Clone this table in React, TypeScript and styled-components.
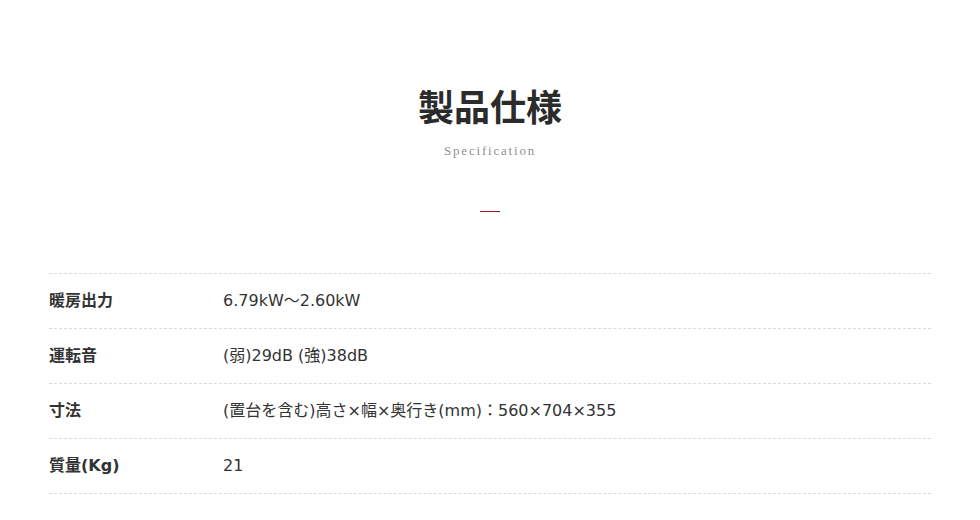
import React from 'react'
import styled, { createGlobalStyle } from 'styled-components'

const GlobalStyle = createGlobalStyle`
  html, body {
    margin: 0;
    padding: 0;
    background: #fff;
  }
  body {
    font-family: "DejaVu Sans", "Noto Sans CJK JP", sans-serif;
    color: #333;
  }
`

const Section = styled.section`
  padding: 84px 49px 0;
`

const Header = styled.header`
  display: flex;
  flex-direction: column;
  align-items: center;
`

const Title = styled.h2`
  margin: 0;
  font-family: "Noto Sans CJK JP", sans-serif;
  font-size: 36px;
  line-height: 43px;
  font-weight: 700;
  color: #2b2b2b;
`

const SubTitle = styled.p`
  margin: 14px 0 0;
  font-family: "Liberation Serif", "DejaVu Serif", serif;
  font-size: 13px;
  line-height: 20px;
  letter-spacing: 1.8px;
  color: #949090;
`

const Accent = styled.span`
  display: block;
  width: 20px;
  height: 1px;
  margin-top: 50px;
  background: #a3141e;
`

const SpecTable = styled.dl`
  margin: 61px 0 0;
  border-top: 1px dashed #dadada;
`

const Row = styled.div`
  display: grid;
  grid-template-columns: 174px 1fr;
  align-items: center;
  height: 54px;
  border-bottom: 1px dashed #dadada;
`

const Label = styled.dt`
  margin: 0;
  font-size: 16px;
  line-height: 22px;
  font-weight: 700;
  color: #333;
`

const Value = styled.dd`
  margin: 0;
  font-size: 16px;
  line-height: 22px;
  color: #333;
`

const specs = [
  { label: '暖房出力', value: '6.79kW～2.60kW' },
  { label: '運転音', value: '(弱)29dB (強)38dB' },
  { label: '寸法', value: '(置台を含む)高さ×幅×奥行き(mm)：560×704×355' },
  { label: '質量(Kg)', value: '21' },
]

export default function App() {
  return (
    <>
      <GlobalStyle />
      <Section>
        <Header>
          <Title>製品仕様</Title>
          <SubTitle>Specification</SubTitle>
          <Accent />
        </Header>
        <SpecTable>
          {specs.map((s) => (
            <Row key={s.label}>
              <Label>{s.label}</Label>
              <Value>{s.value}</Value>
            </Row>
          ))}
        </SpecTable>
      </Section>
    </>
  )
}
